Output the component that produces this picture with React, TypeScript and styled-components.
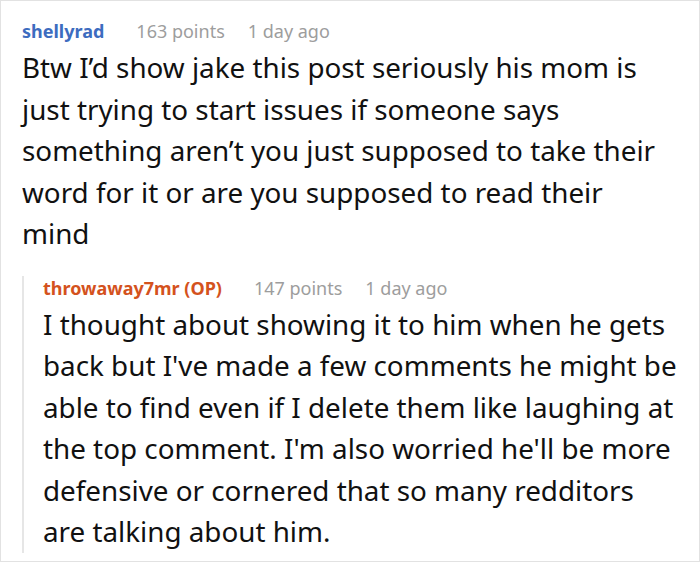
import React from "react";
import styled, { createGlobalStyle } from "styled-components";

const Global = createGlobalStyle`
  html, body {
    margin: 0;
    padding: 0;
    background: #fff;
  }
  body {
    font-family: "Noto Sans", "Open Sans", sans-serif;
  }
`;

const Frame = styled.div`
  width: 700px;
  height: 562px;
  box-sizing: border-box;
  border: 1px solid #e2e2e2;
  padding: 18px 20px 0 21px;
  overflow: hidden;
`;

const Comment = styled.div<{ $reply?: boolean }>`
  margin-top: ${(p) => (p.$reply ? "21px" : "0")};
  padding-right: ${(p) => (p.$reply ? "0" : "4px")};
  ${(p) =>
    p.$reply &&
    `
    border-left: 2px solid #e6e6e6;
    padding-left: 19px;
  `}
`;

const Meta = styled.div`
  display: flex;
  align-items: baseline;
  gap: 23px;
  font-size: 18px;
  line-height: 24px;
`;

const Author = styled.span<{ $op?: boolean }>`
  font-weight: 700;
  margin-right: 9px;
  color: ${(p) => (p.$op ? "#d4521d" : "#3d6cbf")};
`;

const Info = styled.span`
  color: #9d9d9d;
`;

const Body = styled.p`
  margin: 4px 0 0;
  font-size: 27.8px;
  line-height: 41.5px;
  color: #111;
`;

const comments = [
  {
    author: "shellyrad",
    points: "163 points",
    time: "1 day ago",
    text: "Btw I\u2019d show jake this post seriously his mom is just trying to start issues if someone says something aren\u2019t you just supposed to take their word for it or are you supposed to read their mind",
  },
  {
    author: "throwaway7mr (OP)",
    op: true,
    points: "147 points",
    time: "1 day ago",
    text: "I thought about showing it to him when he gets back but I've made a few comments he might be able to find even if I delete them like laughing at the top comment. I'm also worried he'll be more defensive or cornered that so many redditors are talking about him.",
  },
];

export default function App() {
  return (
    <>
      <Global />
      <Frame>
        {comments.map((c, i) => (
          <Comment key={i} $reply={i > 0}>
            <Meta>
              <Author $op={c.op}>{c.author}</Author>
              <Info>{c.points}</Info>
              <Info>{c.time}</Info>
            </Meta>
            <Body>{c.text}</Body>
          </Comment>
        ))}
      </Frame>
    </>
  );
}
